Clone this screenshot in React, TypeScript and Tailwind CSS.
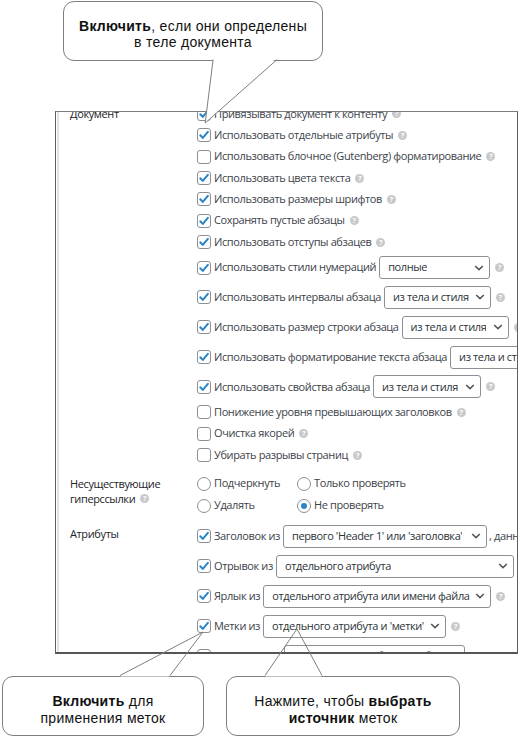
import React from "react";

const checksTop = [
  { t: "Привязывать документ к контенту", on: true },
  { t: "Использовать отдельные атрибуты", on: true },
  { t: "Использовать блочное (Gutenberg) форматирование", on: false },
  { t: "Использовать цвета текста", on: true },
  { t: "Использовать размеры шрифтов", on: true },
  { t: "Сохранять пустые абзацы", on: true },
  { t: "Использовать отступы абзацев", on: true },
];

const selectRows = [
  { t: "Использовать стили нумераций", v: "полные", w: "w-[111px]" },
  { t: "Использовать интервалы абзаца", v: "из тела и стиля", w: "w-[107px]" },
  { t: "Использовать размер строки абзаца", v: "из тела и стиля", w: "w-[107px]" },
  { t: "Использовать форматирование текста абзаца", v: "из тела и стиля", w: "w-[107px]" },
  { t: "Использовать свойства абзаца", v: "из тела и стиля", w: "w-[108px]" },
];

const checksBottom = [
  "Понижение уровня превышающих заголовков",
  "Очистка якорей",
  "Убирать разрывы страниц",
];

const attrRows = [
  { t: "Заголовок из", v: "первого 'Header 1' или 'заголовка'", w: "w-[204px]", after: ", данные из метаданных", help: false },
  { t: "Отрывок из", v: "отдельного атрибута", w: "w-[238px]", after: "", help: true },
  { t: "Ярлык из", v: "отдельного атрибута или имени файла", w: "w-[228px]", after: "", help: true },
  { t: "Метки из", v: "отдельного атрибута и 'метки'", w: "w-[183px]", after: "", help: true },
  { t: "Категории из", v: "отдельного атрибута и 'рубрики'", w: "w-[181px]", after: "", help: true },
];

function Help() {
  return (
    <span className="ml-[5px] flex h-[9px] w-[9px] shrink-0 items-center justify-center rounded-full bg-[#c8c9cb] text-[7px] font-bold leading-none tracking-normal text-white">
      ?
    </span>
  );
}

function Box({ on }: { on: boolean }) {
  return (
    <span className="flex h-[14px] w-[14px] shrink-0 items-center justify-center rounded-[3px] border border-[#8c8f94] bg-white">
      {on && (
        <svg viewBox="0 0 12 12" className="h-[12px] w-[12px]">
          <path d="M2.3 6.2l2.5 2.7L9.9 2.8" fill="none" stroke="#2a84c6" strokeWidth="2" strokeLinecap="round" strokeLinejoin="round" />
        </svg>
      )}
    </span>
  );
}

function Radio({ on }: { on: boolean }) {
  return (
    <span className="flex h-[14px] w-[14px] shrink-0 items-center justify-center rounded-full border border-[#8c8f94] bg-white">
      {on && <span className="h-[6px] w-[6px] rounded-full bg-[#2a84c6]" />}
    </span>
  );
}

function Select({ value, w }: { value: string; w: string }) {
  return (
    <span className={`ml-[3px] flex h-[23px] shrink-0 items-center justify-between overflow-hidden rounded-[3px] border border-[#8c8f94] bg-white pl-[8px] pr-[5px] text-[#2c3338] ${w}`}>
      <span className="overflow-hidden whitespace-nowrap">{value}</span>
      <svg viewBox="0 0 10 6" className="ml-[4px] h-[6px] w-[10px] shrink-0">
        <path d="M1.2 1l3.8 3.6L8.8 1" fill="none" stroke="#50575e" strokeWidth="1.6" />
      </svg>
    </span>
  );
}

function Callout({ children, className }: { children: React.ReactNode; className: string }) {
  return (
    <div className={`flex h-[60px] shrink-0 flex-col items-center justify-center rounded-[11px] border border-[#7f7f7f] bg-white text-center text-[14px] tracking-[0.3px] text-[#111] ${className}`}>
      {children}
    </div>
  );
}

export default function App() {
  return (
    <div className="relative h-[736px] w-[520px] overflow-hidden bg-white font-['Liberation_Sans',Arial,sans-serif]">
      <Callout className="ml-[63px] mt-[1px] h-[59px] w-[260px] pt-[5px] leading-[16px]">
        <p>
          <b>Включить</b>, если они определены
        </p>
        <p>в теле документа</p>
      </Callout>

      <div className="ml-[55px] mt-[50px] flex h-[543px] w-[463px] overflow-hidden border-x border-t border-b-2 border-x-[#5f5f5f] border-t-[#7d7d7d] border-b-[#555] font-['Open_Sans',sans-serif] text-[11px] tracking-[-0.38px] text-[#3c434a]">
        <div className="ml-[1px] w-[2px] shrink-0 bg-[#e2e4e7]" />
        <div className="-mt-[8.7px] flex shrink-0 flex-col whitespace-nowrap pl-[11px]">
          <div className="flex">
            <div className="flex h-[21.35px] w-[127px] shrink-0 items-center text-[#1d2327]">Документ</div>
            <div className="flex flex-col">
              {checksTop.map((r) => (
                <div key={r.t} className="flex h-[21.35px] items-center">
                  <Box on={r.on} />
                  <span className="ml-[3px]">{r.t}</span>
                  <Help />
                </div>
              ))}
              {selectRows.map((r) => (
                <div key={r.t} className="flex h-[29.8px] items-center">
                  <Box on />
                  <span className="ml-[3px]">{r.t}</span>
                  <Select value={r.v} w={r.w} />
                  <Help />
                </div>
              ))}
              {checksBottom.map((t) => (
                <div key={t} className="flex h-[21.35px] items-center">
                  <Box on={false} />
                  <span className="ml-[3px]">{t}</span>
                  <Help />
                </div>
              ))}
            </div>
          </div>

          <div className="mt-[7px] flex">
            <div className="w-[127px] shrink-0 pt-[3.5px] leading-[15px] text-[#1d2327]">
              <p>Несуществующие</p>
              <p className="flex items-center">
                гиперссылки
                <Help />
              </p>
            </div>
            <div className="grid grid-cols-[100px_auto]">
              {[
                { t: "Подчеркнуть", on: false },
                { t: "Только проверять", on: false },
                { t: "Удалять", on: false },
                { t: "Не проверять", on: true },
              ].map((r) => (
                <div key={r.t} className="flex h-[22px] items-center">
                  <Radio on={r.on} />
                  <span className="ml-[3px]">{r.t}</span>
                </div>
              ))}
            </div>
          </div>

          <div className="mt-[4.5px] flex">
            <div className="w-[127px] shrink-0 pt-[5px] leading-[15px] text-[#1d2327]">Атрибуты</div>
            <div className="flex flex-col">
              {attrRows.map((r) => (
                <div key={r.t} className="flex h-[30px] items-center">
                  <Box on />
                  <span className="ml-[3px]">{r.t}</span>
                  <Select value={r.v} w={r.w} />
                  {r.after && <span className="ml-[2px]">{r.after}</span>}
                  {r.help && <Help />}
                </div>
              ))}
            </div>
          </div>
        </div>
      </div>

      <div className="mt-[22px] flex">
        <Callout className="ml-[2px] w-[202px] pt-[7px] leading-[17px]">
          <p>
            <b>Включить</b> для
          </p>
          <p>применения меток</p>
        </Callout>
        <Callout className="ml-[22px] w-[234px] pt-[7px] leading-[17px]">
          <p>
            Нажмите, чтобы <b>выбрать</b>
          </p>
          <p>
            <b>источник</b> меток
          </p>
        </Callout>
      </div>

      <svg className="pointer-events-none absolute inset-0" width="520" height="736" viewBox="0 0 520 736">
        <polygon points="213.3,57 205.2,123 277.6,57" fill="#fff" />
        <line x1="213.1" y1="59.5" x2="205.2" y2="123" stroke="#7f7f7f" strokeWidth="1" />
        <line x1="277.2" y1="59.5" x2="205.2" y2="123" stroke="#7f7f7f" strokeWidth="1" />
        <rect x="120.5" y="673.5" width="49" height="3" fill="#fff" />
        <line x1="120" y1="675.5" x2="203" y2="632" stroke="#7f7f7f" strokeWidth="1" />
        <line x1="170" y1="675.5" x2="203" y2="632" stroke="#7f7f7f" strokeWidth="1" />
        <rect x="265.5" y="673.5" width="56" height="3" fill="#fff" />
        <line x1="265" y1="675.5" x2="297" y2="629" stroke="#7f7f7f" strokeWidth="1" />
        <line x1="322" y1="675.5" x2="297" y2="629" stroke="#7f7f7f" strokeWidth="1" />
      </svg>
    </div>
  );
}
